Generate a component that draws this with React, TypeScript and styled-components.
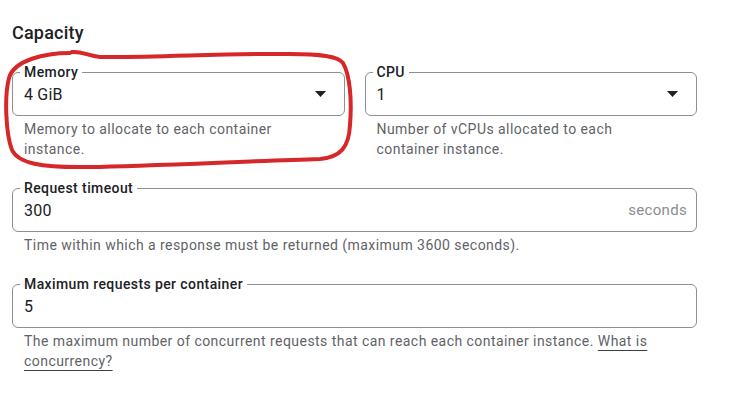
import React from "react";
import styled, { createGlobalStyle } from "styled-components";

const Global = createGlobalStyle`
  html, body { margin: 0; padding: 0; background: #ffffff; }
  body { font-family: Roboto, "Noto Sans", Arial, sans-serif; color: #202124; }
  * { box-sizing: border-box; }
`;

const Page = styled.div`
  position: relative;
  width: 737px;
  height: 407px;
  padding: 21px 40px 0 12px;
  overflow: hidden;
`;

const Title = styled.h2`
  margin: 0 0 19px;
  font-size: 18px;
  line-height: 24px;
  font-weight: 500;
  letter-spacing: 0.2px;
  color: #202124;
`;

const Row = styled.div`
  display: grid;
  grid-template-columns: 1fr 1fr;
  column-gap: 20px;
`;

const Stack = styled.div`
  display: flex;
  flex-direction: column;
  row-gap: 21px;
  margin-top: 21px;
`;

const Group = styled.div`
  display: flex;
  flex-direction: column;
`;

const Box = styled.fieldset`
  margin: 0;
  padding: 0 18px 7px 11px;
  border: 1px solid #8c8f94;
  border-radius: 6px;
  min-width: 0;
`;

const Label = styled.legend`
  margin-left: -4px;
  padding: 0 4px;
  font-size: 14px;
  line-height: 16px;
  font-weight: 500;
  letter-spacing: 0.4px;
  color: #202124;
`;

const ValueRow = styled.div`
  display: flex;
  align-items: center;
  justify-content: space-between;
  height: 28px;
`;

const Value = styled.span`
  font-size: 16px;
  letter-spacing: 0.2px;
  color: #202124;
`;

const Suffix = styled.span`
  font-size: 15px;
  letter-spacing: 0.3px;
  color: #8a8d91;
  margin-right: -9px;
`;

const Arrow = styled.svg`
  width: 11px;
  height: 6px;
  flex: none;
`;

const Helper = styled.div<{ $narrow?: boolean }>`
  margin-top: 3px;
  padding: 0 12px;
  max-width: ${(p) => (p.$narrow ? "300px" : "none")};
  font-size: 14px;
  line-height: 20px;
  letter-spacing: 0.45px;
  color: #5f6368;
`;

const Link = styled.a`
  color: inherit;
  text-decoration: underline;
  text-decoration-color: #3c4043;
  text-underline-offset: 4px;
`;

const Annotation = styled.svg`
  position: absolute;
  left: 0;
  top: 0;
  width: 737px;
  height: 407px;
  pointer-events: none;
`;

function Select({ label, value }: { label: string; value: string }) {
  return (
    <Box>
      <Label>{label}</Label>
      <ValueRow>
        <Value>{value}</Value>
        <Arrow viewBox="0 0 11 6">
          <path d="M0 0 L11 0 L5.5 6 Z" fill="#202124" />
        </Arrow>
      </ValueRow>
    </Box>
  );
}

function Input({ label, value, suffix }: { label: string; value: string; suffix?: string }) {
  return (
    <Box>
      <Label>{label}</Label>
      <ValueRow>
        <Value>{value}</Value>
        {suffix && <Suffix>{suffix}</Suffix>}
      </ValueRow>
    </Box>
  );
}

export default function App() {
  return (
    <>
      <Global />
      <Page>
        <Title>Capacity</Title>
        <Row>
          <Group>
            <Select label="Memory" value="4 GiB" />
            <Helper $narrow>Memory to allocate to each container instance.</Helper>
          </Group>
          <Group>
            <Select label="CPU" value="1" />
            <Helper $narrow>Number of vCPUs allocated to each container instance.</Helper>
          </Group>
        </Row>
        <Stack>
          <Group>
            <Input label="Request timeout" value="300" suffix="seconds" />
            <Helper>Time within which a response must be returned (maximum 3600 seconds).</Helper>
          </Group>
          <Group>
            <Input label="Maximum requests per container" value="5" />
            <Helper>
              The maximum number of concurrent requests that can reach each container instance.{" "}
              <Link href="#">What is concurrency?</Link>
            </Helper>
          </Group>
        </Stack>
        <Annotation viewBox="0 0 737 407">
          <path
            d="M 70 53 C 45 53, 14 60, 9 78 C 4 97, 6 135, 12 150 C 18 163, 40 168, 90 167 C 150 166, 250 161, 320 159 C 340 157, 349 148, 350 125 C 352 100, 350 75, 343 63 C 338 56, 320 54, 290 54 C 230 53, 150 58, 100 57 C 88 56, 82 51, 72 52"
            fill="none"
            stroke="#d62828"
            strokeWidth="4"
            strokeLinecap="round"
            strokeLinejoin="round"
          />
        </Annotation>
      </Page>
    </>
  );
}
